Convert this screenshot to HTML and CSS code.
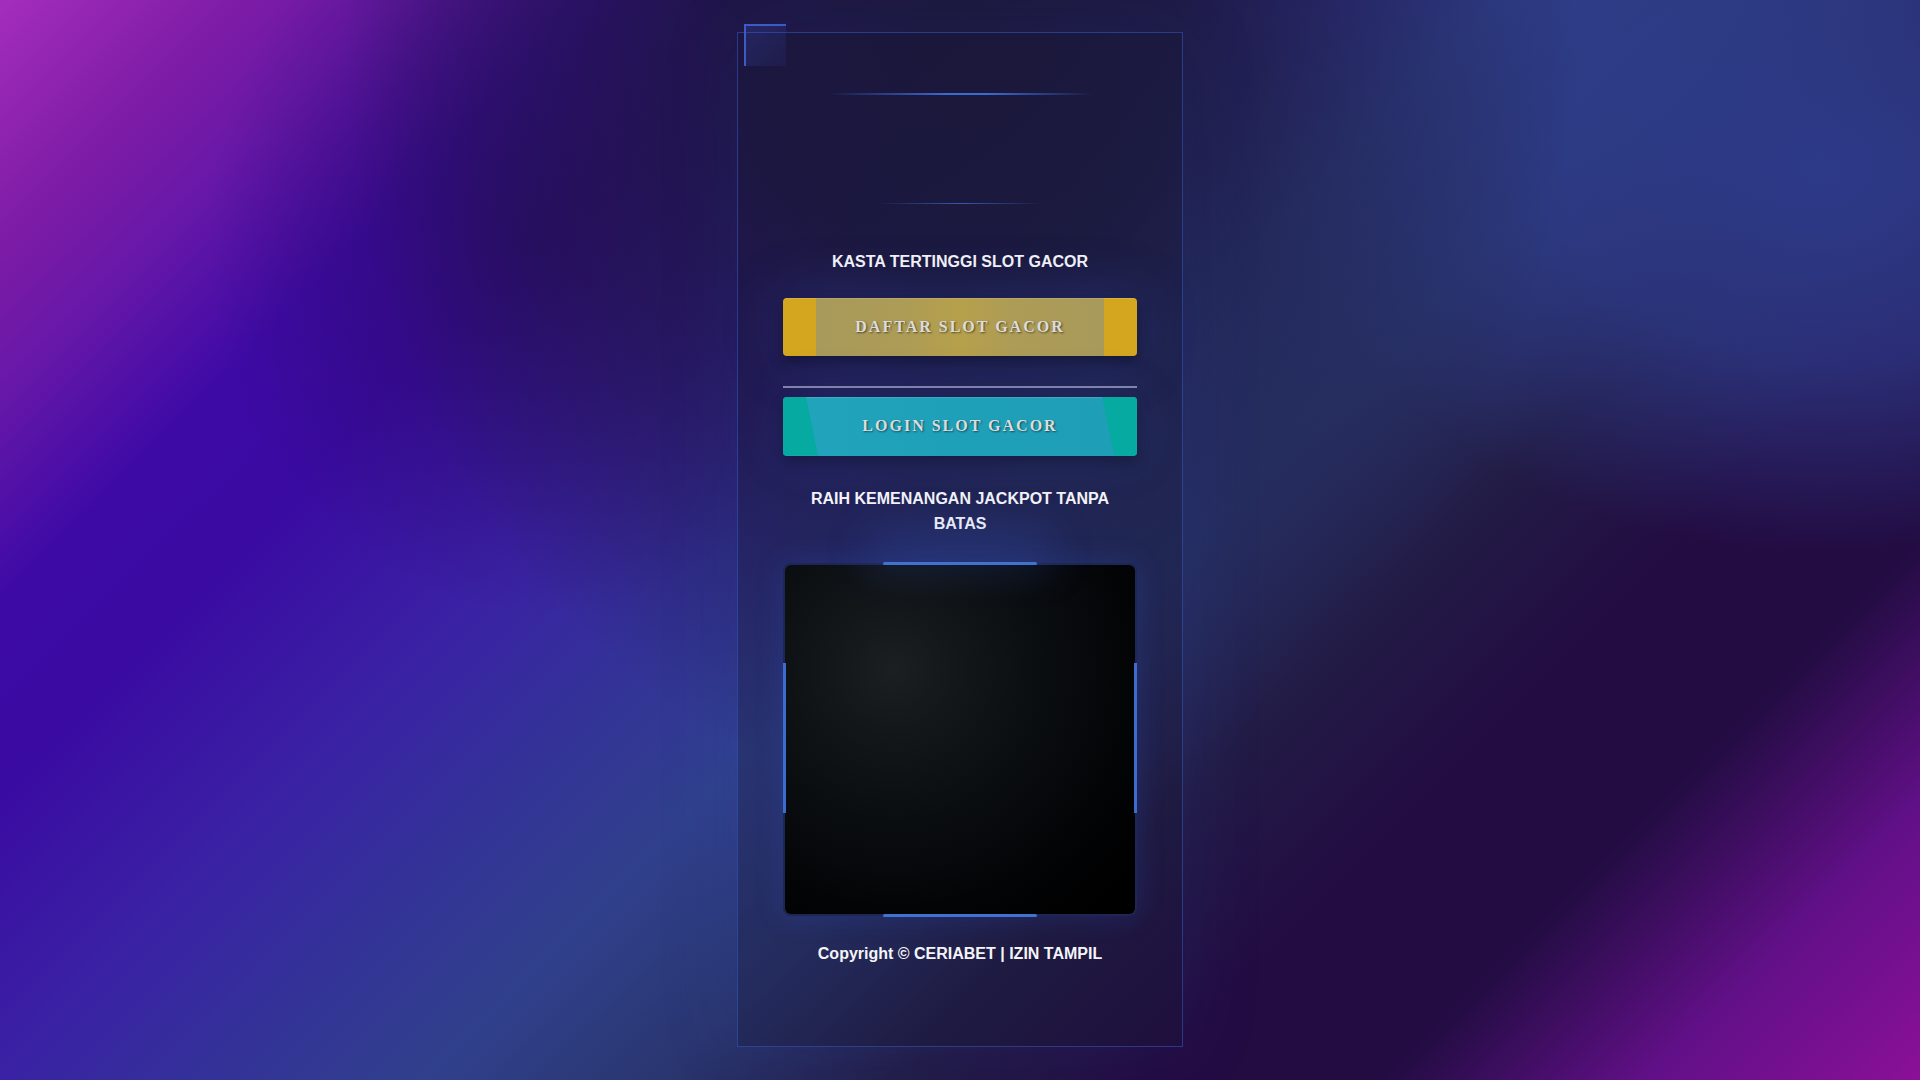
FILE: index.html
```html
<!DOCTYPE html>
<html lang="id">
<head>
<meta charset="utf-8">
<title>CERIABET</title>
<link rel="stylesheet" href="styles.css">
</head>
<body>
<div class="page">
  <main class="card">
    <span class="corner"></span>
    <div class="logo-area">
      <span class="glow-line glow-line-top"></span>
      <span class="glow-line glow-line-bottom"></span>
    </div>
    <h2 class="tagline tagline-top">KASTA TERTINGGI SLOT GACOR</h2>
    <a class="btn btn-daftar" href="#">DAFTAR SLOT GACOR</a>
    <hr class="divider">
    <a class="btn btn-login" href="#">LOGIN SLOT GACOR</a>
    <p class="tagline tagline-mid">RAIH KEMENANGAN JACKPOT TANPA BATAS</p>
    <div class="banner">
      <span class="bar bar-top"></span>
      <span class="bar bar-bottom"></span>
      <span class="bar bar-left"></span>
      <span class="bar bar-right"></span>
      <div class="banner-inner"></div>
    </div>
    <p class="copyright">Copyright © CERIABET | IZIN TAMPIL</p>
  </main>
</div>
</body>
</html>
```

FILE: styles.css
```css
* { box-sizing: border-box; }
html, body { margin: 0; padding: 0; height: 100%; }
body {
  font-family: "Liberation Sans", Arial, sans-serif;
  color: #fff;
  overflow: hidden;
  background:
    radial-gradient(ellipse 620px 800px at 50% 0%, rgba(26,24,54,0.95) 0%, rgba(26,24,54,0.85) 35%, rgba(26,24,54,0.4) 70%, rgba(26,24,54,0) 100%),
    radial-gradient(ellipse 330px 380px at 28% 22%, rgba(36,10,84,0.6) 0%, rgba(36,10,84,0.3) 55%, rgba(36,10,84,0) 100%),
    radial-gradient(ellipse 520px 380px at 95% 16%, rgba(46,60,140,0.95) 0%, rgba(46,60,140,0.7) 50%, rgba(46,60,140,0) 100%),
    linear-gradient(135deg, #a42dbd 0%, #7e1ca6 8%, #6818a8 13%, #3e0aa6 20%, #3a0aa2 26%, #3a22a4 36%, #34309a 42%, #30408c 50%, #2a3670 58%, #221c46 66%, #230c42 74%, #220c42 82%, #621088 91%, #8a1098 100%);
}
.page {
  min-height: 100%;
  display: flex;
  justify-content: center;
  align-items: flex-start;
  padding-top: 32px;
}
.card {
  position: relative;
  width: 446px;
  height: 1015px;
  border: 1px solid rgba(52, 90, 200, 0.55);
  background: rgba(22, 24, 52, 0.3);
  box-shadow: 0 0 80px rgba(40, 70, 190, 0.12);
  padding: 0 45px;
  display: flex;
  flex-direction: column;
  align-items: stretch;
}
.corner {
  position: absolute;
  left: 6px;
  top: -9px;
  width: 42px;
  height: 42px;
  border-top: 2px solid #3a5cc4;
  border-left: 2px solid #3a5cc4;
  background: linear-gradient(135deg, rgba(70, 90, 210, 0.22), rgba(70, 90, 210, 0.08));
}
.logo-area {
  display: flex;
  flex-direction: column;
  align-items: center;
  padding-top: 60px;
}
.glow-line { display: block; }
.glow-line-top {
  width: 265px;
  height: 2px;
  background: linear-gradient(to right, rgba(50,100,220,0), #3a6ad4 45%, #3a6ad4 60%, rgba(50,100,220,0));
}
.glow-line-bottom {
  width: 167px;
  height: 1px;
  margin-top: 108px;
  background: linear-gradient(to right, rgba(50,100,220,0), rgba(60,110,220,0.75) 50%, rgba(50,100,220,0));
}
.tagline {
  margin: 0;
  font-size: 16px;
  font-weight: bold;
  line-height: 25.6px;
  text-align: center;
  color: #f4f4f8;
}
.tagline-top { margin-top: 45px; }
.btn {
  position: relative;
  display: flex;
  align-items: center;
  justify-content: center;
  height: 58px;
  border-radius: 4px;
  text-decoration: none;
  font-family: "Liberation Serif", "Times New Roman", serif;
  font-weight: bold;
  font-size: 16px;
  letter-spacing: 2px;
  color: #dcdcdc;
  text-shadow: 1px 1px 2px rgba(0, 0, 0, 0.55);
  overflow: hidden;
}
.btn-daftar {
  margin-top: 23px;
  background: linear-gradient(to right, #d4a51f 0, #d4a51f 33px, #a89a5b 33px, #ad9c56 35%, #b6a04b 50%, #ad9c56 65%, #a89a5b calc(100% - 33px), #d4a51f calc(100% - 33px), #d4a51f 100%);
  box-shadow: 0 6px 14px rgba(0, 0, 0, 0.35), 0 0 60px rgba(60, 90, 210, 0.28), inset 0 1px 0 rgba(255,255,255,0.12);
}
.divider {
  margin: 30px 0 0;
  height: 2px;
  border: 0;
  background: rgba(200, 200, 222, 0.62);
}
.btn-login {
  margin-top: 9px;
  height: 59px;
  background: linear-gradient(to right, #22a4bd 0%, #1ea0b8 50%, #1f9fb7 100%);
  box-shadow: 0 6px 14px rgba(0, 0, 0, 0.3), 0 0 50px rgba(60, 90, 210, 0.2), inset 0 1px 0 rgba(255,255,255,0.12);
}
.btn-login::before,
.btn-login::after {
  content: "";
  position: absolute;
  top: 0;
  bottom: 0;
  width: 36px;
  background: #07aaa0;
}
.btn-login::before {
  left: 0;
  clip-path: polygon(0 0, 23px 0, 35px 100%, 0 100%);
}
.btn-login::after {
  right: 0;
  clip-path: polygon(1px 0, 100% 0, 100% 100%, 13px 100%);
}
.tagline-mid { margin-top: 30px; }
.banner {
  position: relative;
  margin-top: 26px;
  height: 353px;
  border: 2px solid #1d2752;
  border-radius: 8px;
  box-shadow: 0 0 28px rgba(50, 90, 220, 0.22);
}
.banner-inner {
  height: 100%;
  border-radius: 6px;
  background: radial-gradient(circle at 31% 30%, #1c1f22 0%, #14171a 18%, #0a0d10 45%, #030406 70%, #000 90%);
}
.bar {
  position: absolute;
  background: #4072d0;
  z-index: 1;
}
.bar-top, .bar-bottom {
  left: 28%;
  width: 44%;
  height: 3px;
  border-radius: 2px;
}
.bar-top {
  top: -3px;
  box-shadow: 0 -14px 44px 16px rgba(60, 100, 230, 0.24);
}
.bar-bottom { bottom: -3px; }
.bar-left, .bar-right {
  top: 28%;
  height: 43%;
  width: 3px;
  background: #3d6cd0;
}
.bar-left { left: -2px; }
.bar-right { right: -2px; }
.copyright {
  margin: 25px 0 0;
  font-size: 16px;
  font-weight: bold;
  line-height: 25.6px;
  text-align: center;
  color: #f4f4f8;
}
```
